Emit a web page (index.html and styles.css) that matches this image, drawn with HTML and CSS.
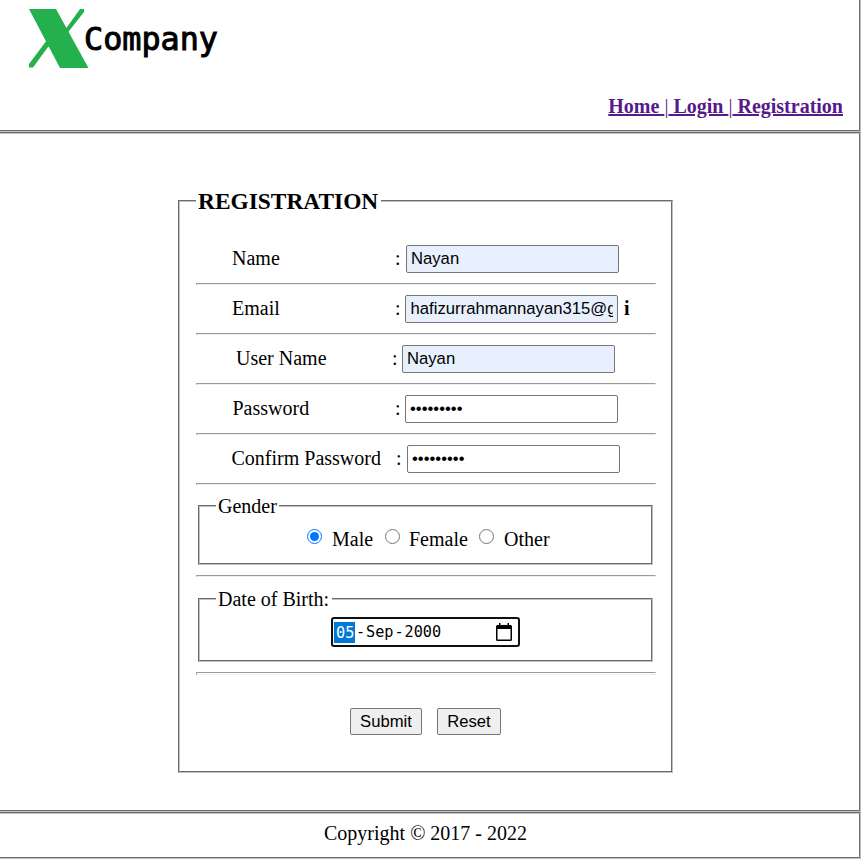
FILE: index.html
```
<!DOCTYPE html>
<html lang="en">
<head>
<meta charset="utf-8">
<title>Registration</title>
<link rel="stylesheet" href="styles.css">
</head>
<body>
<header class="top">
  <svg class="logo" width="200" height="66" viewBox="0 0 200 66" role="img" aria-label="X Company">
    <path d="M52 1H56V4L39.500 25L20 39L5 59.500H1V56L19 32L38 20.500Z" fill="#24b04d"/>
    <path d="M1 1H28L60.500 60H32Z" fill="#24b04d"/>
    <text x="56" y="42" textLength="134" lengthAdjust="spacingAndGlyphs" class="brand">Company</text>
  </svg>
  <nav><a href="#"><b>Home </b>|<b> Login </b>|<b> Registration</b></a></nav>
</header>
<main>
  <fieldset class="panel">
    <legend>REGISTRATION</legend>
    <div class="row name"><label>Name</label><span>:</span><input class="filled" value="Nayan"></div>
    <hr>
    <div class="row email"><label>Email</label><span>:</span><input class="filled" value="hafizurrahmannayan315@gmail.com"><b>i</b></div>
    <hr>
    <div class="row user"><label>User Name</label><span>:</span><input class="filled" value="Nayan"></div>
    <hr>
    <div class="row pass"><label>Password</label><span>:</span><input type="password" value="123456789"></div>
    <hr>
    <div class="row confirm"><label>Confirm Password</label><span>:</span><input type="password" value="123456789"></div>
    <hr>
    <fieldset class="group gender">
      <legend>Gender</legend>
      <div class="options">
        <input type="radio" name="g" checked><label class="male">Male</label>
        <input type="radio" name="g"><label class="female">Female</label>
        <input type="radio" name="g"><label>Other</label>
      </div>
    </fieldset>
    <hr>
    <fieldset class="group birth">
      <legend>Date of Birth:</legend>
      <div class="date">
        <span class="day">05</span><span class="dash">-</span><span>Sep</span><span class="dash">-</span><span>2000</span>
        <svg width="16" height="18" viewBox="0 0 16 18"><path d="M3 0h1.500v2h7V0H13v2h1.500q1.500 0 1.500 1.500v13q0 1.500-1.500 1.500h-13q-1.500 0-1.500-1.500v-13q0-1.500 1.500-1.500H3zM1.500 6v10.500h13V6z" fill="#000" fill-rule="evenodd"/></svg>
      </div>
    </fieldset>
    <hr class="last">
    <div class="actions"><button class="submit">Submit</button><button class="reset">Reset</button></div>
  </fieldset>
</main>
<footer>Copyright © 2017 - 2022</footer>
</body>
</html>
```
FILE: styles.css
```
* { box-sizing: border-box; }
body { margin: 0; width: 861px; background: #fff; color: #000; font: 20px/22px "Liberation Serif", serif; }
header, main, footer { border: 2px groove #c0c0c0; border-left: 0; }
.top { height: 132px; border-top: 0; padding: 8px 16px 0 28px; display: flex; flex-direction: column; }
.logo { display: block; }
.brand { font: 32px "DejaVu Sans Mono", monospace; stroke: #000; stroke-width: 1px; }
nav { align-self: flex-end; margin-top: 21px; }
nav a { color: #551a8b; text-decoration: underline; }
main { height: 680px; padding: 54px 0 0 178px; }
fieldset { margin: 0; border: 2px groove #c0c0c0; min-width: 0; }
legend { padding: 0 2px; height: 22px; line-height: 22px; }
.panel { width: 495px; height: 585px; padding: 31px 15px 0 16px; }
.panel > legend { font-size: 23.4px; font-weight: bold; height: 26px; line-height: 26px; padding-right: 3px; }
hr { margin: 10px 0; height: 2px; border: 1px solid; border-color: #9a9a9a #eee #eee #9a9a9a; }
.row { display: flex; height: 28px; line-height: 26px; }
.row label { width: 163px; }
.row span { width: 11px; }
.row input { width: 213px; height: 28px; margin: 0; padding: 1px 4px; border: 1px solid #767676; border-radius: 2px; font: 16.67px "Liberation Sans", sans-serif; background: #fff; color: #000; }
.row .filled { background: #e8f0fe; }
.row b { margin-left: 6px; }
.name { padding-left: 36px; }
.email { padding-left: 36px; }
.email span { width: 10px; }
.email input { padding-left: 4.6px; }
.user { padding-left: 40px; }
.user label { width: 156px; }
.user span { width: 10px; }
.pass { padding-left: 36.500px; }
.pass label { width: 162.500px; }
.pass span { width: 10px; }
.confirm { padding-left: 35.500px; }
.confirm label { width: 164.500px; }
.group { width: 455px; margin-left: 2px; padding: 0 16px; }
.gender { height: 70px; }
.gender legend { line-height: 23px; }
.options { display: flex; margin: 11px 0 0 91px; }
.options input { width: 15px; height: 15px; margin: 1px 10px 0 0; }
.options .male { width: 53px; }
.options .female { width: 70px; margin-left: -1px; }
.birth { height: 74px; margin-top: 11px; }
.birth legend { padding-right: 3px; }
.date { width: 189px; height: 30px; margin: 7px 0 0 115px; border: 2px solid #101010; border-radius: 3px; display: flex; align-items: center; padding: 0 6px 0 1px; font: 15.23px/22px "DejaVu Sans Mono", monospace; }
.day { background: #0078d7; color: #fff; padding: 0 1px 0 2px; width: 21px; height: 21px; }
.dash { width: 11px; text-align: center; }
.date svg { margin-left: auto; }
.last { height: 3px; margin-bottom: 0; }
.actions { display: flex; padding: 33px 0 0 154px; gap: 15px; }
button { height: 27px; padding: 0; border: 1px solid #767676; border-radius: 2px; background: #efefef; color: #000; font: 16.67px "Liberation Sans", sans-serif; }
.submit { width: 72px; }
.reset { width: 64px; }
footer { height: 47px; padding-top: 8px; text-align: center; padding-right: 8px; }
```
